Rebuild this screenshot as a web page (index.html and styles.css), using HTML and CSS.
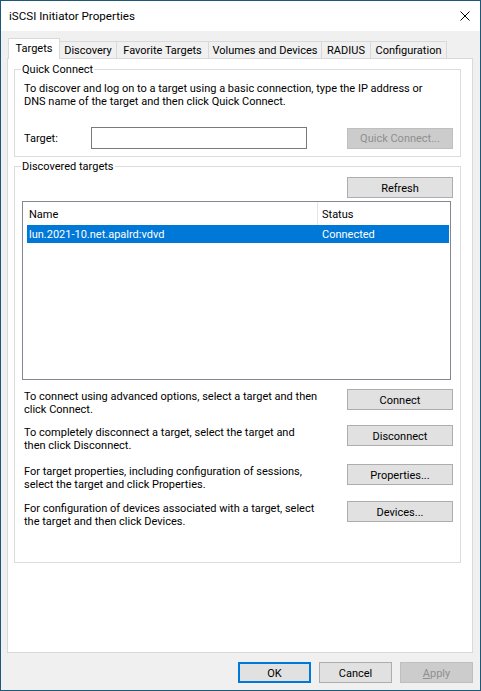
FILE: index.html
```html
<!DOCTYPE html>
<html>
<head>
<meta charset="utf-8">
<link rel="stylesheet" href="styles.css">
</head>
<body>
<div class="window">
  <div class="titlebar">
    <span class="title">iSCSI Initiator Properties</span>
    <svg class="close" width="10" height="10" viewBox="0 0 10 10"><path d="M0.5 0.5 L9.5 9.5 M9.5 0.5 L0.5 9.5" stroke="#000" stroke-width="1" fill="none"/></svg>
  </div>
  <div class="body">
    <div class="tabs">
      <div class="tab active tab-targets">Targets</div>
      <div class="tab tab-discovery">Discovery</div>
      <div class="tab tab-favorite">Favorite Targets</div>
      <div class="tab tab-volumes">Volumes and Devices</div>
      <div class="tab tab-radius">RADIUS</div>
      <div class="tab tab-config">Configuration</div>
    </div>
    <div class="panel">
      <fieldset class="group quick">
        <legend>Quick Connect</legend>
        <p class="text">To discover and log on to a target using a basic connection, type the IP address or<br>DNS name of the target and then click Quick Connect.</p>
        <div class="target-row">
          <span class="label">Target:</span>
          <div class="input"></div>
          <button class="btn disabled">Quick Connect...</button>
        </div>
      </fieldset>
      <fieldset class="group discovered">
        <legend>Discovered targets</legend>
        <div class="refresh-row"><button class="btn">Refresh</button></div>
        <div class="list">
          <div class="list-header">
            <div class="hcell hname">Name</div>
            <div class="hcell hstatus">Status</div>
          </div>
          <div class="list-row selected">
            <div class="cell cname">lun.2021-10.net.apalrd:vdvd</div>
            <div class="cell cstatus">Connected</div>
          </div>
        </div>
        <div class="actions">
          <div class="action">
            <p class="text">To connect using advanced options, select a target and then<br>click Connect.</p>
            <button class="btn">Connect</button>
          </div>
          <div class="action">
            <p class="text">To completely disconnect a target, select the target and<br>then click Disconnect.</p>
            <button class="btn">Disconnect</button>
          </div>
          <div class="action action-wide">
            <p class="text">For target properties, including configuration of sessions,<br>select the target and click Properties.</p>
            <button class="btn">Properties...</button>
          </div>
          <div class="action action-mid">
            <p class="text">For configuration of devices associated with a target, select<br>the target and then click Devices.</p>
            <button class="btn">Devices...</button>
          </div>
        </div>
      </fieldset>
    </div>
    <div class="dialog-buttons">
      <button class="btn dbtn default">OK</button>
      <button class="btn dbtn">Cancel</button>
      <button class="btn dbtn disabled"><u>A</u>pply</button>
    </div>
  </div>
</div>
</body>
</html>
```
FILE: styles.css
```css
html, body {
  margin: 0;
  padding: 0;
  background: #ffffff;
}
body {
  font-family: Roboto, "Noto Sans", sans-serif;
  font-size: 11px;
  line-height: 13px;
  color: #000;
}
.window {
  width: 481px;
  height: 691px;
  box-sizing: border-box;
  border: 1px solid #1b587a;
  background: #f0f0f0;
  display: flex;
  flex-direction: column;
}
.titlebar {
  height: 30px;
  flex: none;
  background: #fff;
  display: flex;
  align-items: center;
  justify-content: space-between;
  padding: 0 10px 0 8px;
}
.title {
  font-size: 11.6px;
  padding-top: 1px;
}
.close {
  display: block;
}
.body {
  flex: 1;
  display: flex;
  flex-direction: column;
  padding: 7px 7px 0 6px;
}
.tabs {
  display: flex;
  align-items: flex-end;
  height: 20px;
  margin-left: 1px;
}
.tab {
  box-sizing: border-box;
  height: 17px;
  border: 1px solid #d9d9d9;
  border-bottom: none;
  margin-right: -1px;
  padding-top: 1px;
  background: #f0f0f0;
  display: flex;
  align-items: center;
  justify-content: center;
  white-space: nowrap;
}
.tab.active {
  height: 21px;
  margin-bottom: -1px;
  padding-top: 0;
  padding-bottom: 2px;
  background: #fff;
  position: relative;
  z-index: 1;
}
.tab-targets { width: 52px; }
.tab-discovery { width: 58px; }
.tab-favorite { width: 93px; }
.tab-volumes { width: 114px; }
.tab-radius { width: 50px; }
.tab-config { width: 77px; }
.panel {
  box-sizing: border-box;
  width: 466px;
  height: 595px;
  border: 1px solid #d9d9d9;
  background: #fff;
}
.group {
  border: 1px solid #dcdcdc;
  margin: 0 11px 0 6px;
  padding: 0 7px 0 9px;
  min-width: 0;
}
.group legend {
  padding: 0 1px;
  margin-left: -3px;
  line-height: 13px;
}
.quick {
  margin-top: 4px;
  padding-top: 5px;
  padding-bottom: 7px;
}
.discovered {
  margin-top: 3px;
  padding-top: 4px;
  padding-bottom: 35px;
}
.text {
  margin: 0;
  padding-top: 1px;
  white-space: nowrap;
}
.target-row {
  display: flex;
  align-items: center;
  height: 22px;
  margin-top: 19px;
}
.label {
  width: 67px;
  flex: none;
  padding-top: 1px;
}
.input {
  box-sizing: border-box;
  width: 216px;
  height: 22px;
  border: 1px solid #7a7a7a;
  background: #fff;
}
.btn {
  box-sizing: border-box;
  width: 106px;
  height: 21px;
  flex: none;
  margin: 0;
  padding: 1px 0 0 0;
  border: 1px solid #adadad;
  background: #e1e1e1;
  font: inherit;
  color: #000;
  display: flex;
  align-items: center;
  justify-content: center;
}
.target-row .btn {
  margin-left: auto;
}
.btn.disabled {
  background: #cccccc;
  border-color: #bfbfbf;
  color: #8f8f8f;
}
.refresh-row {
  display: flex;
  justify-content: flex-end;
}
.list {
  box-sizing: border-box;
  height: 179px;
  margin: 3px 2px 0 -2px;
  border: 1px solid #828790;
  background: #fff;
}
.list-header {
  display: grid;
  grid-template-columns: 295px 1fr;
  height: 23px;
}
.hcell {
  display: flex;
  align-items: center;
  padding-top: 1px;
}
.hname {
  padding-left: 6px;
  border-right: 1px solid #e5e5e5;
}
.hstatus {
  padding-left: 4px;
}
.list-row {
  display: grid;
  grid-template-columns: 291px 1fr;
  height: 18px;
  margin: 0 1px 0 4px;
}
.list-row.selected {
  background: #0078d7;
  color: #fff;
}
.cell {
  display: flex;
  align-items: center;
  padding-top: 1px;
}
.cname {
  padding-left: 2px;
}
.cstatus {
  padding-left: 4px;
}
.actions {
  margin-top: 9px;
}
.action {
  display: flex;
  justify-content: space-between;
  align-items: flex-start;
  height: 26px;
}
.action + .action {
  margin-top: 10px;
}
.action + .action-wide {
  margin-top: 13px;
}
.action + .action-mid {
  margin-top: 11px;
}
.dialog-buttons {
  display: flex;
  justify-content: flex-end;
  gap: 8px;
  margin-top: 9px;
}
.dbtn {
  width: 73px;
  height: 21px;
}
.dbtn.default {
  border: 2px solid #0078d7;
}
```
